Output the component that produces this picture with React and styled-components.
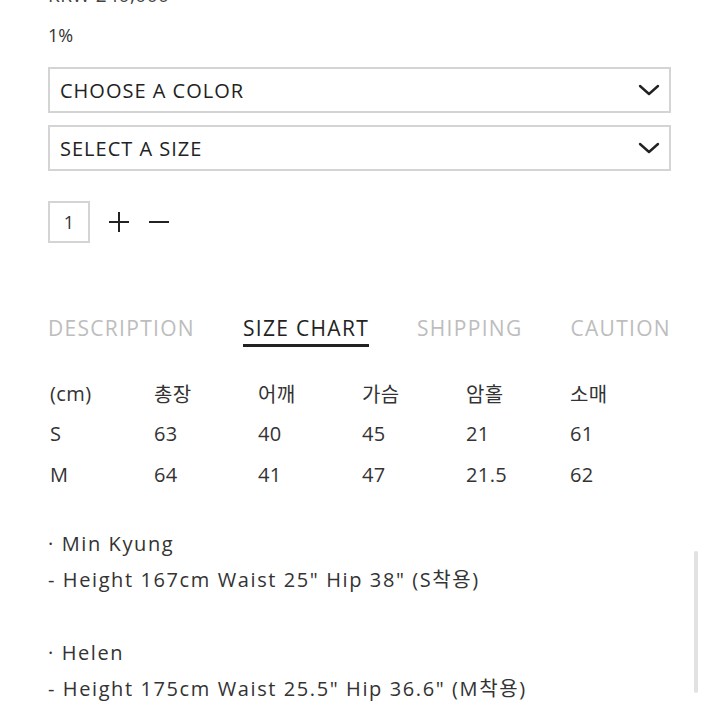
import React from 'react'
import styled, { createGlobalStyle } from 'styled-components'

const GlobalStyle = createGlobalStyle`
  html, body {
    margin: 0;
    padding: 0;
    background: #fff;
    overflow: hidden;
  }
  body {
    font-family: 'Open Sans', 'Noto Sans CJK KR', sans-serif;
    color: #333;
  }
`

const Page = styled.div`
  width: 720px;
  height: 720px;
  position: relative;
  overflow: hidden;
`

const Content = styled.div`
  padding: 0 49px 0 48px;
  margin-top: -17px;
  display: flex;
  flex-direction: column;
`

const Price = styled.div`
  font-size: 19px;
  line-height: 24px;
  color: #444;
  letter-spacing: 0.5px;
`

const Discount = styled.div`
  font-size: 18px;
  line-height: 24px;
  margin-top: 16px;
  color: #333;
`

const Select = styled.div`
  height: 42px;
  border: 2px solid #d4d4d4;
  display: flex;
  align-items: center;
  justify-content: space-between;
  padding: 0 9px 0 10px;
  margin-top: ${p => p.$top}px;
  font-size: 20px;
  color: #222;
  letter-spacing: 1px;
`

const Qty = styled.div`
  display: flex;
  align-items: center;
  gap: 18px;
  margin-top: 30px;
`

const QtyBox = styled.div`
  width: 38px;
  height: 38px;
  border: 2px solid #d4d4d4;
  display: flex;
  align-items: center;
  justify-content: center;
  font-size: 18px;
  color: #333;
`

const Tabs = styled.div`
  display: flex;
  justify-content: space-between;
  margin-top: 71px;
`

const Tab = styled.div`
  font-size: 21px;
  letter-spacing: 1.3px;
  color: ${p => (p.$active ? '#222' : '#bdbdbd')};
  padding-bottom: 2px;
  border-bottom: 3px solid ${p => (p.$active ? '#222' : 'transparent')};
`

const Table = styled.div`
  display: grid;
  grid-template-columns: repeat(6, 104px);
  grid-auto-rows: 40.5px;
  margin-top: 26px;
  font-size: 20px;
  letter-spacing: 0.4px;
  color: #333;
  align-items: center;
`

const Cell = styled.div`
  padding-left: 2px;
`

const Notes = styled.div`
  margin-top: 31px;
  display: flex;
  flex-direction: column;
  font-size: 20px;
  color: #333;
  letter-spacing: 1.6px;
`

const Line = styled.div`
  line-height: 36px;
  margin-top: ${p => p.$gap || 0}px;
`

const Scrollbar = styled.div`
  position: absolute;
  left: 694px;
  top: 551px;
  width: 4px;
  height: 142px;
  border-radius: 2px;
  background: #e2e2e2;
`

const Chevron = () => (
  <svg width="22" height="14" viewBox="0 0 22 14" fill="none">
    <path d="M2 3l9 8 9-8" stroke="#222" strokeWidth="2.4" strokeLinecap="round" strokeLinejoin="round" />
  </svg>
)

const Plus = () => (
  <svg width="22" height="22" viewBox="0 0 22 22">
    <path d="M11 1v20M1 11h20" stroke="#222" strokeWidth="2" />
  </svg>
)

const Minus = () => (
  <svg width="22" height="22" viewBox="0 0 22 22">
    <path d="M1 11h20" stroke="#222" strokeWidth="2" />
  </svg>
)

const rows = [
  ['(cm)', '총장', '어깨', '가슴', '암홀', '소매'],
  ['S', '63', '40', '45', '21', '61'],
  ['M', '64', '41', '47', '21.5', '62'],
]

const tabs = ['DESCRIPTION', 'SIZE CHART', 'SHIPPING', 'CAUTION']

export default function App() {
  return (
    <Page>
      <GlobalStyle />
      <Content>
        <Price>KRW 240,000</Price>
        <Discount>1%</Discount>
        <Select $top={20}>
          CHOOSE A COLOR
          <Chevron />
        </Select>
        <Select $top={12}>
          SELECT A SIZE
          <Chevron />
        </Select>
        <Qty>
          <QtyBox>1</QtyBox>
          <Plus />
          <Minus />
        </Qty>
        <Tabs>
          {tabs.map(t => (
            <Tab key={t} $active={t === 'SIZE CHART'}>{t}</Tab>
          ))}
        </Tabs>
        <Table>
          {rows.map((r, i) => r.map((c, j) => <Cell key={i + '-' + j}>{c}</Cell>))}
        </Table>
        <Notes>
          <Line>· Min Kyung</Line>
          <Line>- Height 167cm Waist 25" Hip 38" (S착용)</Line>
          <Line $gap={37}>· Helen</Line>
          <Line>- Height 175cm Waist 25.5" Hip 36.6" (M착용)</Line>
        </Notes>
      </Content>
      <Scrollbar />
    </Page>
  )
}
